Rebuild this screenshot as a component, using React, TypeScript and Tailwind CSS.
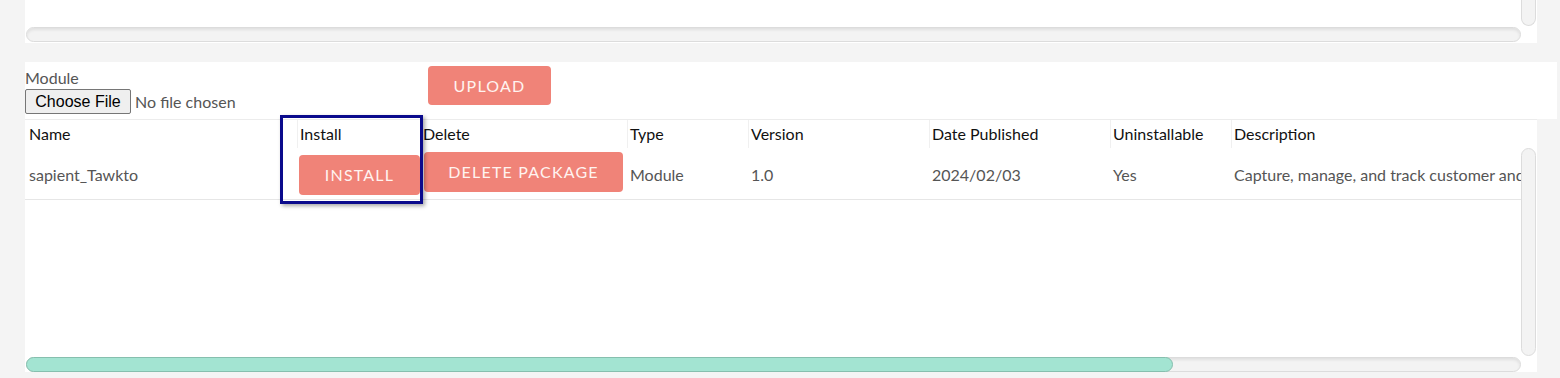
import React from "react";

const cols = [
  { label: "Name", w: 272 },
  { label: "Install", w: 123 },
  { label: "Delete", w: 207 },
  { label: "Type", w: 121 },
  { label: "Version", w: 181 },
  { label: "Date Published", w: 181 },
  { label: "Uninstallable", w: 121 },
  { label: "Description", w: 400 },
];

function HTrack({ children }: { children?: React.ReactNode }) {
  return (
    <div className="relative h-[15px] w-full rounded-full border border-[#dcdcdc] bg-[#f3f3f3] shadow-[inset_0_2px_3px_rgba(0,0,0,0.08)]">
      {children}
    </div>
  );
}

export default function App() {
  return (
    <div className="relative w-[1560px] h-[378px] overflow-hidden bg-[#f4f4f4] pl-[25px] font-['Lato',sans-serif]">
      {/* top panel */}
      <div className="flex w-[1512px] h-[43px] bg-white">
        <div className="flex w-[1496px] flex-col justify-end pb-[1px] pl-[1px]">
          <HTrack />
        </div>
        <div className="w-[15px]">
          <div className="h-[26px] w-[15px] rounded-b-full border border-t-0 border-[#dcdcdc] bg-[#f3f3f3]" />
        </div>
      </div>

      <div className="h-[19px]" />

      {/* module upload panel */}
      <div className="flex w-[1532px] h-[57px] bg-white">
        <div className="w-[403px] pt-[7px]">
          <div className="text-[16px] leading-[18px] text-[#555]">Module</div>
          <div className="mt-[2px] flex items-center">
            <div className="flex h-[25px] w-[106px] items-center justify-center rounded-[2px] border border-[#767676] bg-[#efefef] font-['Liberation_Sans',Arial,sans-serif] text-[16px] text-black">
              Choose File
            </div>
            <span className="ml-[4px] text-[16px] text-[#555]">No file chosen</span>
          </div>
        </div>
        <div className="pt-[4px]">
          <div className="flex h-[39px] w-[123px] items-center justify-center rounded-[4px] bg-[#f08378] text-[16px] tracking-[1.2px] text-[#fff3f0]">
            UPLOAD
          </div>
        </div>
      </div>

      {/* table panel */}
      <div className="flex w-[1512px] h-[253px] border-t border-[#ececec] bg-white">
        <div className="flex w-[1496px] flex-col">
          <div className="overflow-hidden">
            <table className="table-fixed border-collapse w-[1606px]">
              <colgroup>
                {cols.map((c) => (
                  <col key={c.label} style={{ width: c.w }} />
                ))}
              </colgroup>
              <thead>
                <tr className="h-[32px]">
                  {cols.map((c, i) => (
                    <th key={c.label} className="p-0 align-top text-left font-normal">
                      <div
                        className={
                          i === 0
                            ? "flex h-[28px] items-center pl-[4px] text-[16px] text-[#111]"
                            : "flex h-[28px] items-center border-l border-[#f0f0f0] pl-[2px] text-[16px] text-[#111]"
                        }
                      >
                        {c.label}
                      </div>
                    </th>
                  ))}
                </tr>
              </thead>
              <tbody>
                <tr className="h-[47px] border-b border-[#e6e6e6] text-[16px] text-[#555]">
                  <td className="pl-[4px]">sapient_Tawkto</td>
                  <td className="pl-[2px]">
                    <div className="flex h-[40px] w-[121px] items-center justify-center rounded-[4px] bg-[#f08378] tracking-[1.2px] text-[#fff3f0]">
                      INSTALL
                    </div>
                  </td>
                  <td className="pl-[4px]">
                    <div className="-mt-[6px] flex h-[40px] w-[199px] items-center justify-center rounded-[4px] bg-[#f08378] tracking-[1.2px] text-[#fff3f0]">
                      DELETE PACKAGE
                    </div>
                  </td>
                  <td className="pl-[3px]">Module</td>
                  <td className="pl-[3px]">1.0</td>
                  <td className="pl-[3px]">2024/02/03</td>
                  <td className="pl-[3px]">Yes</td>
                  <td className="pl-[3px] whitespace-nowrap">Capture, manage, and track customer and sales interactions</td>
                </tr>
              </tbody>
            </table>
          </div>
          <div className="flex-1" />
          <div className="pl-[1px]">
            <HTrack>
              <div className="absolute -left-px -top-px h-[15px] w-[1147px] rounded-full border border-[#86bfae] bg-[#a3e4d2]" />
            </HTrack>
          </div>
        </div>
        <div className="w-[15px] pt-[28px]">
          <div className="h-[208px] w-[15px] rounded-full border border-[#dcdcdc] bg-[#f3f3f3]" />
        </div>
      </div>

      {/* highlight box */}
      <div className="absolute left-[280px] top-[115px] h-[89px] w-[143px] border-[3px] border-[#0a0a8c] shadow-[2px_2px_4px_rgba(0,0,0,0.35)]" />
    </div>
  );
}
